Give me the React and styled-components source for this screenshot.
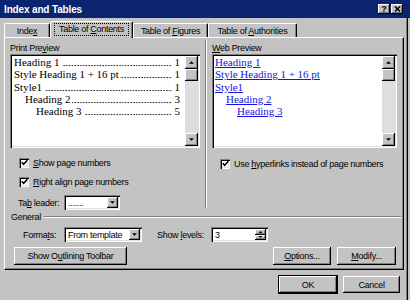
import React from 'react';
import styled, { createGlobalStyle } from 'styled-components';

const GRAY = '#c3c3c3';

const GlobalStyle = createGlobalStyle`
  html, body {
    margin: 0;
    padding: 0;
    background: ${GRAY};
  }

  * {
    box-sizing: border-box;
  }

  body {
    font-family: "Liberation Sans", Arial, sans-serif;
    font-size: 9px;
    letter-spacing: -0.3px;
    color: #000;
  }
`;

const raised = `
  background: ${GRAY};
  box-shadow: inset -1px -1px #000, inset 1px 1px #fff, inset -2px -2px #808080;
`;

const sunken = `
  background: #fff;
  box-shadow: inset 1px 1px #808080, inset 2px 2px #000, inset -1px -1px #fff, inset -2px -2px #dfdfdf;
`;

const Window = styled.div`
  width: 410px;
  height: 300px;
  background: ${GRAY};
  box-shadow: inset -2px 0 ${GRAY}, inset -3px 0 #000, inset -4px 0 #808080;
  display: flex;
  flex-direction: column;
  overflow: hidden;
`;

const TitleBar = styled.div`
  flex: none;
  height: 18px;
  background: #0a2470;
  display: flex;
  align-items: center;
  justify-content: space-between;
  padding: 0 7px 0 4px;
`;

const Title = styled.span`
  color: #fff;
  font-weight: bold;
  font-size: 10px;
  letter-spacing: -0.15px;
`;

const CaptionButtons = styled.div`
  display: flex;
  gap: 1px;
`;

const CaptionButton = styled.div`
  ${raised}
  width: 12px;
  height: 10px;
  display: flex;
  align-items: center;
  justify-content: center;
  font-weight: bold;
  font-size: 9px;
  line-height: 1;
  letter-spacing: 0;
`;

const TabStrip = styled.div`
  flex: none;
  height: 19px;
  display: flex;
  align-items: flex-end;
  padding-left: 4px;
  position: relative;
  z-index: 1;
`;

const Tab = styled.div`
  width: ${({ $w }) => $w}px;
  height: ${({ $active }) => ($active ? 17 : 14)}px;
  margin-bottom: ${({ $active }) => ($active ? -1 : 0)}px;
  background: ${GRAY};
  border-top: 1px solid #fff;
  border-left: 1px solid #fff;
  border-right: 1px solid #000;
  border-radius: 2px 2px 0 0;
  box-shadow: inset -1px 0 #808080;
  display: flex;
  align-items: ${({ $active }) => ($active ? 'flex-start' : 'center')};
  justify-content: center;
  padding-top: ${({ $active }) => ($active ? 1 : 0)}px;
  white-space: nowrap;
`;

const FocusRing = styled.span`
  border: 1px dotted #000;
  padding: 1px 4px;
  line-height: 9px;
`;

const Key = styled.span`
  text-decoration: underline;
`;

const Panel = styled.div`
  width: 400px;
  margin-left: 4px;
  border-top: 1px solid #fff;
  border-left: 1px solid #fff;
  border-right: 1px solid #000;
  border-bottom: 1px solid #000;
  box-shadow: inset -1px -1px #808080;
  display: flex;
  flex-direction: column;
  padding-bottom: 4px;
`;

const TopArea = styled.div`
  height: 172px;
  display: flex;
`;

const Column = styled.div`
  width: ${({ $w }) => $w}px;
  margin-left: 5px;
  padding-top: 5px;
  display: flex;
  flex-direction: column;
`;

const Separator = styled.div`
  width: 2px;
  margin: 2px 0 2px 5px;
  border-left: 1px solid #808080;
  border-right: 1px solid #fff;
`;

const Label = styled.div`
  height: 11px;
  line-height: 11px;
  white-space: nowrap;
`;

const PreviewBox = styled.div`
  ${sunken}
  height: 94px;
  padding: 2px;
  display: flex;
`;

const PreviewPane = styled.div`
  flex: 1;
  min-width: 0;
  padding: 0 5px 0 ${({ $web }) => ($web ? 1 : 2)}px;
  overflow: hidden;
  font-family: "Liberation Serif", "Times New Roman", serif;
  font-size: 11px;
  line-height: 12.3px;
  letter-spacing: 0;
`;

const TocLine = styled.div`
  display: flex;
  white-space: nowrap;
  padding-left: ${({ $level }) => $level * 11}px;
`;

const Leader = styled.span`
  flex: 1;
  min-width: 0;
  margin: 0 3px 0 ${({ $gap }) => ($gap ? 3 : 1)}px;
  background-image: radial-gradient(circle at 1.2px 9.6px, #222 0.6px, transparent 0.95px);
  background-size: 2.8px 100%;
  background-repeat: repeat-x;
  background-position: right top;
`;

const WebLink = styled.span`
  color: #1414e0;
  text-decoration: underline;
`;

const Scrollbar = styled.div`
  width: 13px;
  flex: none;
  display: flex;
  flex-direction: column;
  background: #dedede;
`;

const ScrollButton = styled.div`
  ${raised}
  height: ${({ $h }) => $h}px;
  flex: none;
  display: flex;
  align-items: center;
  justify-content: center;
`;

const Track = styled.div`
  flex: 1;
`;

const CheckRow = styled.div`
  height: 11px;
  margin-top: ${({ $mt }) => $mt}px;
  padding-left: ${({ $indent }) => $indent}px;
  display: flex;
  align-items: center;
  gap: 4px;
  white-space: nowrap;
`;

const CheckBox = styled.span`
  ${sunken}
  width: 10px;
  height: 10px;
  flex: none;
  display: flex;
  align-items: center;
  justify-content: center;
`;

const FieldRow = styled.div`
  height: 15px;
  margin-top: ${({ $mt }) => $mt}px;
  padding-left: ${({ $indent }) => $indent}px;
  display: flex;
  align-items: center;
  white-space: nowrap;
`;

const FieldLabel = styled.span`
  width: ${({ $w }) => $w}px;
  margin-left: ${({ $ml }) => $ml || 0}px;
  flex: none;
`;

const Field = styled.div`
  ${sunken}
  width: ${({ $w }) => $w}px;
  height: 15px;
  flex: none;
  display: flex;
  align-items: center;
  padding: 2px;
`;

const FieldText = styled.span`
  flex: 1;
  padding-left: 2px;
  white-space: nowrap;
  overflow: hidden;
`;

const DropButton = styled.div`
  ${raised}
  width: 11px;
  height: 11px;
  display: flex;
  align-items: center;
  justify-content: center;
`;

const Spinner = styled.div`
  width: 11px;
  height: 11px;
  display: flex;
  flex-direction: column;
`;

const SpinHalf = styled.div`
  ${raised}
  flex: 1;
  display: flex;
  align-items: center;
  justify-content: center;
`;

const GroupHeader = styled.div`
  height: 14px;
  padding: 0 2px 0 6px;
  display: flex;
  align-items: center;
`;

const GroupLine = styled.div`
  flex: 1;
  height: 2px;
  margin-left: 3px;
  border-top: 1px solid #808080;
  border-bottom: 1px solid #fff;
`;

const ButtonRow = styled.div`
  margin-top: 5px;
  padding: 0 7px 0 9px;
  display: flex;
  justify-content: space-between;
`;

const ButtonGroup = styled.div`
  display: flex;
  gap: 6px;
`;

const Button = styled.div`
  ${raised}
  width: ${({ $w }) => $w}px;
  height: ${({ $h }) => $h || 18}px;
  display: flex;
  align-items: center;
  justify-content: center;
  white-space: nowrap;
  ${({ $default }) => $default && 'outline: 1px solid #000;'}
`;

const Footer = styled.div`
  margin-top: 6px;
  padding-right: 10px;
  display: flex;
  justify-content: flex-end;
  gap: 6px;
`;

const Arrow = ({ up, w = 5, h = 3 }) => (
  <svg width={w} height={h} viewBox="0 0 6 3">
    <path d={up ? 'M0 3 L3 0 L6 3 Z' : 'M0 0 L6 0 L3 3 Z'} fill="#000" />
  </svg>
);

const Check = () => (
  <svg width="7" height="7" viewBox="0 0 7 7">
    <path d="M0.8 3.2 L2.6 5.2 L6.3 1.2" stroke="#000" strokeWidth="1.6" fill="none" />
  </svg>
);

const CloseGlyph = () => (
  <svg width="7" height="6" viewBox="0 0 7 6">
    <path d="M1 0.5 L6 5.5 M6 0.5 L1 5.5" stroke="#000" strokeWidth="1.5" />
  </svg>
);

const entries = [
  { label: 'Heading 1', page: 1, level: 0, gap: true },
  { label: 'Style Heading 1 + 16 pt', page: 1, level: 0, gap: false },
  { label: 'Style1', page: 1, level: 0, gap: true },
  { label: 'Heading 2', page: 3, level: 1, gap: false },
  { label: 'Heading 3', page: 5, level: 2, gap: true },
];

const Scroll = () => (
  <Scrollbar>
    <ScrollButton $h={13}>
      <Arrow up />
    </ScrollButton>
    <ScrollButton $h={12} />
    <Track />
    <ScrollButton $h={13}>
      <Arrow />
    </ScrollButton>
  </Scrollbar>
);

const CheckOption = ({ children, mt, indent }) => (
  <CheckRow $mt={mt} $indent={indent}>
    <CheckBox>
      <Check />
    </CheckBox>
    <span>{children}</span>
  </CheckRow>
);

const App = () => (
  <>
    <GlobalStyle />
    <Window>
      <TitleBar>
        <Title>Index and Tables</Title>
        <CaptionButtons>
          <CaptionButton>?</CaptionButton>
          <CaptionButton>
            <CloseGlyph />
          </CaptionButton>
        </CaptionButtons>
      </TitleBar>

      <TabStrip>
        <Tab $w={46}>
          <span>
            Inde<Key>x</Key>
          </span>
        </Tab>
        <Tab $w={83} $active>
          <FocusRing>
            Table of <Key>C</Key>ontents
          </FocusRing>
        </Tab>
        <Tab $w={75}>
          <span>
            Table of <Key>F</Key>igures
          </span>
        </Tab>
        <Tab $w={89}>
          <span>
            Table of <Key>A</Key>uthorities
          </span>
        </Tab>
      </TabStrip>

      <Panel>
        <TopArea>
          <Column $w={190}>
            <Label>
              Print Pre<Key>v</Key>iew
            </Label>
            <PreviewBox>
              <PreviewPane>
                {entries.map((entry) => (
                  <TocLine key={entry.label} $level={entry.level}>
                    <span>{entry.label}</span>
                    <Leader $gap={entry.gap} />
                    <span>{entry.page}</span>
                  </TocLine>
                ))}
              </PreviewPane>
              <Scroll />
            </PreviewBox>
            <CheckOption mt={9} indent={9}>
              <Key>S</Key>how page numbers
            </CheckOption>
            <CheckOption mt={8} indent={9}>
              <Key>R</Key>ight align page numbers
            </CheckOption>
            <FieldRow $mt={8} $indent={8}>
              <FieldLabel $w={46}>
                Ta<Key>b</Key> leader:
              </FieldLabel>
              <Field $w={56}>
                <FieldText>.......</FieldText>
                <DropButton>
                  <Arrow />
                </DropButton>
              </Field>
            </FieldRow>
          </Column>

          <Separator />

          <Column $w={185}>
            <Label>
              <Key>W</Key>eb Preview
            </Label>
            <PreviewBox>
              <PreviewPane $web>
                {entries.map((entry) => (
                  <TocLine key={entry.label} $level={entry.level}>
                    <WebLink>{entry.label}</WebLink>
                  </TocLine>
                ))}
              </PreviewPane>
              <Scroll />
            </PreviewBox>
            <CheckOption mt={10} indent={8}>
              Use <Key>h</Key>yperlinks instead of page numbers
            </CheckOption>
          </Column>
        </TopArea>

        <GroupHeader>
          <span>General</span>
          <GroupLine />
        </GroupHeader>

        <FieldRow $mt={3} $indent={18}>
          <FieldLabel $w={41}>
            Forma<Key>t</Key>s:
          </FieldLabel>
          <Field $w={78}>
            <FieldText>From template</FieldText>
            <DropButton>
              <Arrow />
            </DropButton>
          </Field>
          <FieldLabel $w={54} $ml={15}>
            Show <Key>l</Key>evels:
          </FieldLabel>
          <Field $w={57}>
            <FieldText>3</FieldText>
            <Spinner>
              <SpinHalf>
                <Arrow up w={5} h={2} />
              </SpinHalf>
              <SpinHalf>
                <Arrow w={5} h={2} />
              </SpinHalf>
            </Spinner>
          </Field>
        </FieldRow>

        <ButtonRow>
          <Button $w={113}>
            <span>
              Show O<Key>u</Key>tlining Toolbar
            </span>
          </Button>
          <ButtonGroup>
            <Button $w={58}>
              <span>
                <Key>O</Key>ptions...
              </span>
            </Button>
            <Button $w={59}>
              <span>
                <Key>M</Key>odify...
              </span>
            </Button>
          </ButtonGroup>
        </ButtonRow>
      </Panel>

      <Footer>
        <Button $w={58} $h={17} $default>
          OK
        </Button>
        <Button $w={57} $h={17}>
          Cancel
        </Button>
      </Footer>
    </Window>
  </>
);

export default App;
